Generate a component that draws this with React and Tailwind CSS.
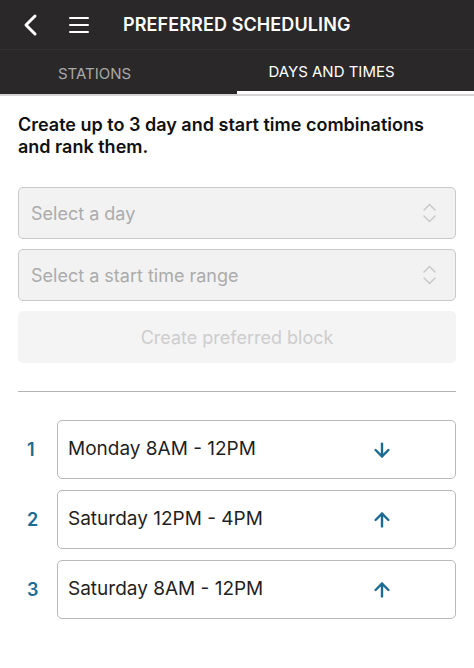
import React from 'react';
import { ArrowDown, ArrowUp } from 'lucide-react';

const blocks = [
  { rank: 1, label: 'Monday 8AM - 12PM', dir: 'down' },
  { rank: 2, label: 'Saturday 12PM - 4PM', dir: 'up' },
  { rank: 3, label: 'Saturday 8AM - 12PM', dir: 'up' },
];

const SelectBox = ({ placeholder }) => (
  <div className="flex h-[52px] items-center justify-between rounded-[5px] border border-[#c9c9c9] bg-[#f2f2f2] pl-3 pr-[18px]">
    <span className="text-[18px] text-[#ababab]">{placeholder}</span>
    <svg className="h-[22px] w-[15px]" viewBox="0 0 15 22" fill="none">
      <path d="M2 8l5.5-5.5L13 8M2 14l5.5 5.5L13 14" stroke="#c6c6c6" strokeWidth="1.4" strokeLinecap="round" strokeLinejoin="round" />
    </svg>
  </div>
);

const App = () => {
  return (
    <div className="min-h-[668px] bg-white font-['Inter',sans-serif]">
      {/* Header */}
      <div className="bg-[#2a2828]">
        <div className="flex h-[50px] items-center border-b border-[#333131]">
          <svg className="ml-[22px] h-6 w-4" viewBox="0 0 16 24" fill="none">
            <path d="M13 3L4 12l9 9" stroke="white" strokeWidth="3" strokeLinecap="round" strokeLinejoin="round" />
          </svg>
          <svg className="ml-[31px] h-5 w-[20px]" viewBox="0 0 20 20" fill="none">
            <path d="M1 3h18M1 10h18M1 17h18" stroke="white" strokeWidth="2" strokeLinecap="round" />
          </svg>
          <h1 className="ml-[34px] text-[18px] font-semibold tracking-[0.1px] text-white">PREFERRED SCHEDULING</h1>
        </div>
        <div className="flex h-[44px]">
          <div className="flex flex-1 items-center justify-center pt-1 pr-12 text-[15px] text-[#a9a9a9]">STATIONS</div>
          <div className="flex flex-1 items-center justify-center border-b-[3px] border-white pt-1 pr-12 text-[15px] text-white">DAYS AND TIMES</div>
        </div>
      </div>
      <div className="h-[2px] bg-[#d5d5d5]" />

      <div className="px-[18px]">
        <p className="mt-[18px] text-[18px] font-semibold leading-[22px] text-[#111]">
          Create up to 3 day and start time combinations and rank them.
        </p>

        <div className="mt-[29px] flex flex-col gap-[10px]">
          <SelectBox placeholder="Select a day" />
          <SelectBox placeholder="Select a start time range" />
          <div className="flex h-[52px] items-center justify-center rounded-[5px] bg-[#f4f4f4] text-[18px] text-[#cdcdcd]">
            Create preferred block
          </div>
        </div>

        <div className="mt-[28px] h-px bg-[#b4b4b4]" />

        <div className="mt-7 flex flex-col gap-[11px]">
          {blocks.map((b) => (
            <div key={b.rank} className="flex items-center">
              <span className="w-[39px] pl-[9px] text-[18px] font-semibold text-[#1d6b93]">{b.rank}</span>
              <div className="flex h-[59px] flex-1 items-center rounded-[5px] border border-[#b9b9b9] pl-[10px]">
                <span className="w-[303px] text-[19px] text-[#1f1f1f]">{b.label}</span>
                {b.dir === 'down' ? (
                  <ArrowDown className="h-[22px] w-[22px] text-[#1d6b93]" strokeWidth={2.6} />
                ) : (
                  <ArrowUp className="h-[22px] w-[22px] text-[#1d6b93]" strokeWidth={2.6} />
                )}
              </div>
            </div>
          ))}
        </div>
      </div>
    </div>
  );
};

export default App;
